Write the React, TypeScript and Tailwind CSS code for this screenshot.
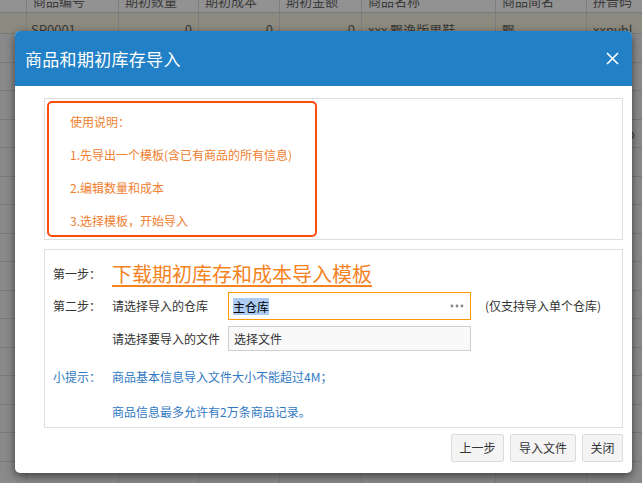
import React from 'react';

const cols = ['', '商品编号', '期初数量', '期初成本', '期初金额', '商品名称', '商品简名', '拼音码'];

// 背景表格（被遮罩变暗）
const BackTable = () => {
  const rows = Array.from({ length: 16 });
  const tail = ['', 'xxsy', '', 'xxdb', 'xs', '', '', '', ':', '', '', '', '', '', '', ''];
  return (
    <div className="absolute inset-0 bg-[#8a8a8a] text-[13px] text-[#3a3a3a]">
      <div className="grid grid-cols-[27px_92px_80px_81px_82px_134px_91px_80px] h-[13px] bg-[#929292] border-b border-[#7a7a7a] overflow-hidden">
        {cols.map((c, i) => (
          <div key={i} className="border-r border-[#7d7d7d] pl-[6px] leading-[13px] -mt-[6px] whitespace-nowrap">{c}</div>
        ))}
      </div>
      <div className="grid grid-cols-[27px_92px_80px_81px_82px_134px_91px_80px] h-[21px] bg-[#8d8a7f] border-b border-[#7a7a7a] overflow-hidden">
        <div className="border-r border-[#7d7d7d]"></div>
        <div className="border-r border-[#7d7d7d] pl-[4px] pt-[9px] leading-[16px]">SP0001</div>
        <div className="border-r border-[#7d7d7d] pr-[6px] pt-[9px] leading-[16px] text-right">0</div>
        <div className="border-r border-[#7d7d7d] pr-[6px] pt-[9px] leading-[16px] text-right">0</div>
        <div className="border-r border-[#7d7d7d] pr-[6px] pt-[9px] leading-[16px] text-right">0</div>
        <div className="border-r border-[#7d7d7d] pl-[6px] pt-[9px] leading-[16px] whitespace-nowrap">xxx 飘逸版男鞋</div>
        <div className="border-r border-[#7d7d7d] pl-[6px] pt-[9px] leading-[16px]">飘</div>
        <div className="pl-[6px] pt-[9px] leading-[16px] whitespace-nowrap">xxpybl</div>
      </div>
      {rows.map((_, r) => (
        <div key={r} className="grid grid-cols-[27px_92px_80px_81px_82px_134px_91px_80px] h-[28.5px] border-b border-[#7a7a7a]">
          <div className="border-r border-[#7d7d7d]"></div>
          <div className="border-r border-[#7d7d7d]"></div>
          <div className="border-r border-[#7d7d7d]"></div>
          <div className="border-r border-[#7d7d7d]"></div>
          <div className="border-r border-[#7d7d7d]"></div>
          <div className="border-r border-[#7d7d7d]"></div>
          <div className="border-r border-[#7d7d7d]"></div>
          <div className="pl-[6px] leading-[28px] whitespace-nowrap">{tail[r] ? 'xx' + tail[r] : ''}</div>
        </div>
      ))}
    </div>
  );
};

const Btn = ({ children, w }: { children: React.ReactNode; w: string }) => (
  <button className={`${w} h-[28px] bg-[#f4f4f4] border border-[#dcdcdc] rounded-[2px] text-[12px] text-[#333]`}>
    {children}
  </button>
);

const App: React.FC = () => {
  return (
    <div
      className="relative w-[642px] h-[483px] overflow-hidden"
      style={{ fontFamily: '"Noto Sans CJK SC", "Noto Sans", sans-serif' }}
    >
      <BackTable />

      {/* 导入弹窗 */}
      <div className="absolute left-[15px] top-[31px] w-[617px] h-[442px] bg-white rounded-[5px] overflow-hidden shadow-[0_3px_10px_rgba(0,0,0,0.55)] flex flex-col">
        <div className="h-[55px] shrink-0 bg-[#2280c7] flex items-center justify-between pl-[10px] pr-[13px]">
          <span className="text-[17px] text-white tracking-[0.3px]">商品和期初库存导入</span>
          <svg width="13" height="13" viewBox="0 0 13 13">
            <path d="M1 1L12 12M12 1L1 12" stroke="#fff" strokeWidth="1.6" />
          </svg>
        </div>

        <div className="flex flex-col pl-[29px] pr-[9px] pt-[12px] pb-[11px]">
          {/* 使用说明 */}
          <div className="h-[142px] border border-[#dedede] p-[2px]">
            <div className="w-[270px] h-[136px] border-2 border-[#fe4b0e] rounded-[5px] pl-[21px] pt-[2px] text-[12px] leading-[33px] text-[#f0802f]">
              <div>使用说明：</div>
              <div>1.先导出一个模板(含已有商品的所有信息)</div>
              <div>2.编辑数量和成本</div>
              <div>3.选择模板，开始导入</div>
            </div>
          </div>

          {/* 步骤 */}
          <div className="mt-[9px] h-[179px] border border-[#dedede] pl-[8px] pt-[10px] text-[12px] text-[#333]">
            <div className="flex items-center h-[28px]">
              <span className="w-[59px]">第一步：</span>
              <a className="text-[20px] leading-[28px] text-[#f5831f] underline decoration-2 underline-offset-[3px] cursor-pointer">
                下载期初库存和成本导入模板
              </a>
            </div>
            <div className="flex items-center h-[28px] mt-[4px]">
              <span className="w-[59px]">第二步：</span>
              <span className="w-[116px]">请选择导入的仓库</span>
              <div className="w-[243px] h-[28px] border border-[#ff9900] flex items-center justify-between pl-[4px] pr-[6px]">
                <span className="bg-[#acccf3] text-black leading-[17px]">主仓库</span>
                <svg width="14" height="4" viewBox="0 0 14 4">
                  <circle cx="2" cy="2" r="1.4" fill="#888" />
                  <circle cx="7" cy="2" r="1.4" fill="#888" />
                  <circle cx="12" cy="2" r="1.4" fill="#888" />
                </svg>
              </div>
              <span className="ml-[14px] text-[12px]">(仅支持导入单个仓库)</span>
            </div>
            <div className="flex items-center h-[25px] mt-[6px]">
              <span className="w-[59px]"></span>
              <span className="w-[116px]">请选择要导入的文件</span>
              <div className="w-[243px] h-[25px] border border-[#cfcfcf] bg-[#f9f9f9] flex items-center pl-[5px]">
                选择文件
              </div>
            </div>
            <div className="flex items-center h-[28px] mt-[12px] text-[#3279c3]">
              <span className="w-[59px]">小提示：</span>
              <span>商品基本信息导入文件大小不能超过4M；</span>
            </div>
            <div className="flex items-center h-[28px] mt-[7px] text-[#3279c3]">
              <span className="w-[59px]"></span>
              <span>商品信息最多允许有2万条商品记录。</span>
            </div>
          </div>

          {/* 按钮 */}
          <div className="flex justify-end gap-[6px] mt-[6px]">
            <Btn w="w-[53px]">上一步</Btn>
            <Btn w="w-[66px]">导入文件</Btn>
            <Btn w="w-[41px]">关闭</Btn>
          </div>
        </div>
      </div>
    </div>
  );
};

export default App;
